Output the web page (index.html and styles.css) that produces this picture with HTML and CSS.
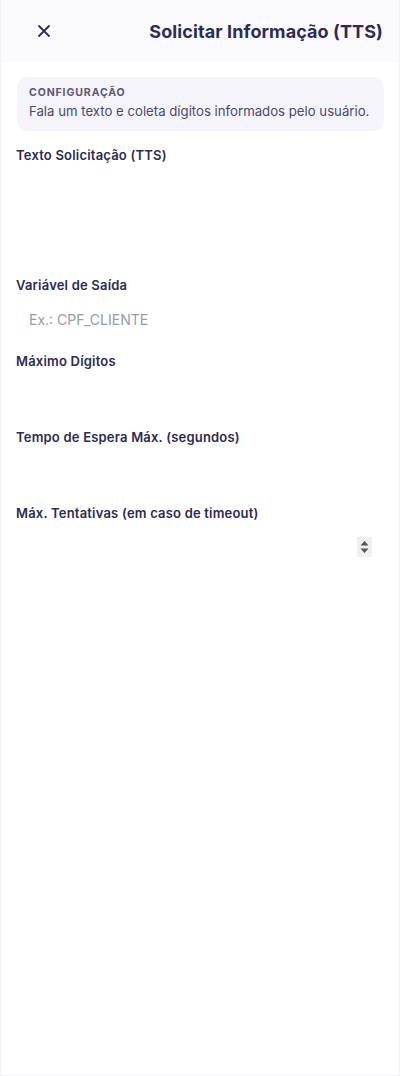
FILE: index.html
```html
<!DOCTYPE html>
<html lang="pt-BR">
<head>
<meta charset="utf-8">
<title>Solicitar Informação (TTS)</title>
<link rel="stylesheet" href="styles.css">
</head>
<body>
<div class="panel">
  <header class="header">
    <button class="close" aria-label="Fechar">
      <svg width="14" height="14" viewBox="0 0 14 14"><path d="M2 2 L12 12 M12 2 L2 12" stroke="#2e2b55" stroke-width="1.8" stroke-linecap="round"/></svg>
    </button>
    <h1 class="title">Solicitar Informação (TTS)</h1>
  </header>
  <main class="body">
    <div class="info">
      <div class="info-kicker">CONFIGURAÇÃO</div>
      <div class="info-text">Fala um texto e coleta dígitos informados pelo usuário.</div>
    </div>
    <div class="field">
      <label class="label">Texto Solicitação (TTS)</label>
      <textarea class="textarea"></textarea>
    </div>
    <div class="field">
      <label class="label">Variável de Saída</label>
      <input class="input" type="text" placeholder="Ex.: CPF_CLIENTE">
    </div>
    <div class="field">
      <label class="label">Máximo Dígitos</label>
      <input class="input" type="text">
    </div>
    <div class="field">
      <label class="label">Tempo de Espera Máx. (segundos)</label>
      <input class="input" type="text">
    </div>
    <div class="field">
      <label class="label">Máx. Tentativas (em caso de timeout)</label>
      <div class="input number">
        <span class="spin">
          <svg width="15" height="20" viewBox="0 0 15 20"><path d="M7.5 4 L11.5 8.5 L3.5 8.5 Z M3.5 11.5 L11.5 11.5 L7.5 16 Z" fill="#555"/></svg>
        </span>
      </div>
    </div>
  </main>
</div>
</body>
</html>
```
FILE: styles.css
```css
* { box-sizing: border-box; }
html, body { margin: 0; padding: 0; background: #fff; }
body { font-family: "Inter", "Noto Sans", sans-serif; color: #2e2b52; }
.panel {
  width: 400px;
  height: 1076px;
  border: 1px solid #f1f1f4;
  border-top: none;
  background: #fff;
  display: flex;
  flex-direction: column;
}
.header {
  height: 62px;
  flex: none;
  background: #fafafc;
  display: flex;
  align-items: center;
  justify-content: space-between;
  padding: 0 16px 0 29px;
}
.close {
  border: none;
  background: transparent;
  padding: 0;
  width: 28px;
  height: 28px;
  display: flex;
  align-items: center;
  justify-content: center;
}
.title {
  margin: 0;
  font-size: 18px;
  font-weight: 700;
  color: #2e2b55;
  letter-spacing: 0.1px;
}
.body {
  padding: 15px 15px 0 15px;
  display: flex;
  flex-direction: column;
}
.info {
  background: #f6f4fb;
  border-radius: 10px;
  padding: 9px 12px 10px 12px;
  margin-bottom: 16px;
  margin-left: 1px;
  height: 54px;
}
.info-kicker {
  font-size: 10.5px;
  font-weight: 700;
  letter-spacing: 0.9px;
  color: #5b5878;
  line-height: 13px;
}
.info-text {
  font-size: 13.2px;
  color: #4b4868;
  line-height: 20px;
  margin-top: 2px;
  white-space: nowrap;
  letter-spacing: 0;
}
.field {
  display: flex;
  flex-direction: column;
  margin-bottom: 14px;
}
.label {
  font-size: 13px;
  font-weight: 600;
  line-height: 16px;
  color: #2e2b52;
  letter-spacing: 0.2px;
}
.textarea, .input {
  margin-top: 6px;
  border: none;
  background: transparent;
  outline: none;
  font-family: inherit;
  font-size: 14px;
  color: #2e2b52;
  resize: none;
  margin-left: 1px;
}
.textarea { height: 94px; }
.input {
  height: 40px;
  padding: 0 12px;
}
.input::placeholder { color: #9a98ad; }
.number {
  display: flex;
  align-items: center;
  justify-content: flex-end;
}
.spin {
  width: 15px;
  height: 20px;
  background: #efefef;
  display: block;
}
.spin svg { display: block; }
```
